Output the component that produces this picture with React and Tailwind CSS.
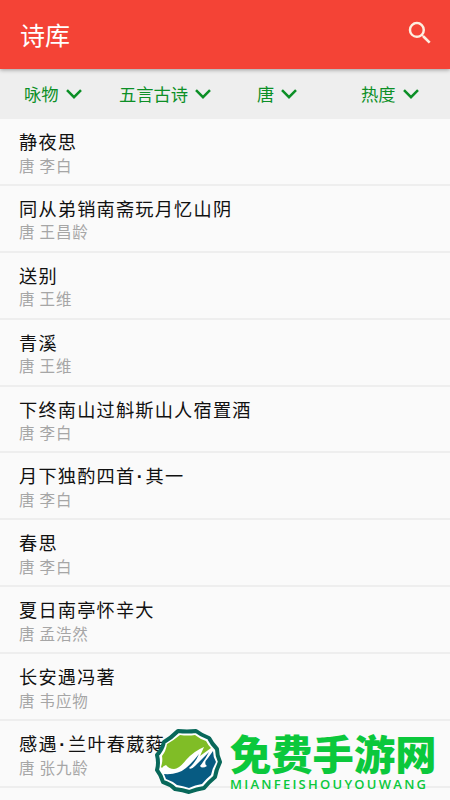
import { MdSearch } from "react-icons/md";

const filters = [
  { label: "咏物", className: "pl-6 w-[119px]" },
  { label: "五言古诗", className: "w-[138px]" },
  { label: "唐", className: "w-[104px]" },
  { label: "热度", className: "" },
];

const poems = [
  { title: "静夜思", author: "李白" },
  { title: "同从弟销南斋玩月忆山阴", author: "王昌龄" },
  { title: "送别", author: "王维" },
  { title: "青溪", author: "王维" },
  { title: "下终南山过斛斯山人宿置酒", author: "李白" },
  { title: "月下独酌四首·其一", author: "李白" },
  { title: "春思", author: "李白" },
  { title: "夏日南亭怀辛大", author: "孟浩然" },
  { title: "长安遇冯著", author: "韦应物" },
  { title: "感遇·兰叶春葳蕤", author: "张九龄" },
];

function Header() {
  return (
    <header className="relative z-10 flex h-[69px] items-center justify-between bg-[#f44336] pl-5 pr-[15px] shadow-[0_1px_4px_rgba(0,0,0,0.35)]">
      <h1 className="-mt-px text-[25px] leading-none text-white">诗库</h1>
      <MdSearch className="-mt-[3px] text-[#fdeee0]" size={30} />
    </header>
  );
}

function FilterBar() {
  return (
    <div className="flex h-[50px] items-center bg-[#eeeeee] text-[17.3px] leading-none text-[#0c8f26]">
      {filters.map((f) => (
        <button key={f.label} className={`flex shrink-0 items-center gap-[7px] ${f.className}`}>
          {f.label}
          <svg width="16" height="10" viewBox="0 0 16 10" fill="none" stroke="currentColor" strokeWidth="2.5">
            <path d="M1 1.2 8 8.2 15 1.2" />
          </svg>
        </button>
      ))}
    </div>
  );
}

function PoemRow({ title, author }) {
  // the middle dot is set narrow, not full width
  const [main, rest] = title.split("·");

  return (
    <li className="h-[66.9px] border-b-2 border-[#eeeeee] pl-[19px] pt-[11px]">
      <p className="h-[22px] text-[18.2px] leading-[22px] tracking-[1.2px] text-[#111]">
        {main}
        {rest && <span className="mx-[1.5px] font-['Liberation_Sans'] font-bold leading-none">·</span>}
        {rest}
      </p>
      <p className="mt-[2.6px] text-[15.5px] leading-[21px] tracking-[0.8px] text-[#a6a6a6]">唐 {author}</p>
    </li>
  );
}

function Watermark() {
  return (
    <div className="absolute left-[154px] top-[728px] flex">
      <svg width="69" height="68" viewBox="0 0 69 68">
        <path
          d="M24 3Q33 4 42 3Q47 7 55 10Q58 16 63 21Q63 28 66 34Q62 42 61 49Q55 54 50 60Q43 61 35 64Q29 62 21 61Q16 56 9 54Q7 47 3 42Q5 35 3 27Q8 22 10 14Q17 10 24 3Z"
          fill="#fff" stroke="#08685a" strokeWidth="4" strokeLinejoin="round"
        />
        <path d="M26 7Q34 8 41 7Q46 11 52 13Q54 17 57 20L46 28 50 19Q40 23 32 32Q25 41 20 41 15 41 12 37 9 38 8 40L7 39Q9 33 8 28Q12 23 13 16Q20 12 26 7Z" fill="#80bd26" />
        <path d="M10 46Q24 47 32 40Q39 34 45 26Q42 34 35 40 37 42 41 38L55 24Q51 32 46 38 48 41 53 38 49 35 54 30L59 23Q59 29 62 34Q58 41 57 47Q52 51 48 56Q41 57 35 60Q29 58 23 57Q18 53 12 51Z" fill="#075b82" />
      </svg>
      <div className="ml-[7px]">
        <p className="text-[41.3px] font-black leading-[49px] text-[#0bc83c]">免费手游网</p>
        <p className="mt-px font-['Open_Sans'] text-[13px] font-semibold leading-none tracking-[2.25px] text-[#0bc83c]">MIANFEISHOUYOUWANG</p>
      </div>
    </div>
  );
}

export default function App() {
  return (
    <div className="relative h-[800px] w-[450px] overflow-hidden bg-[#fafafa] font-['Noto_Sans_CJK_SC',sans-serif]">
      <Header />
      <FilterBar />
      <ul>
        {poems.map((p) => (
          <PoemRow key={p.title} {...p} />
        ))}
      </ul>
      <Watermark />
    </div>
  );
}
